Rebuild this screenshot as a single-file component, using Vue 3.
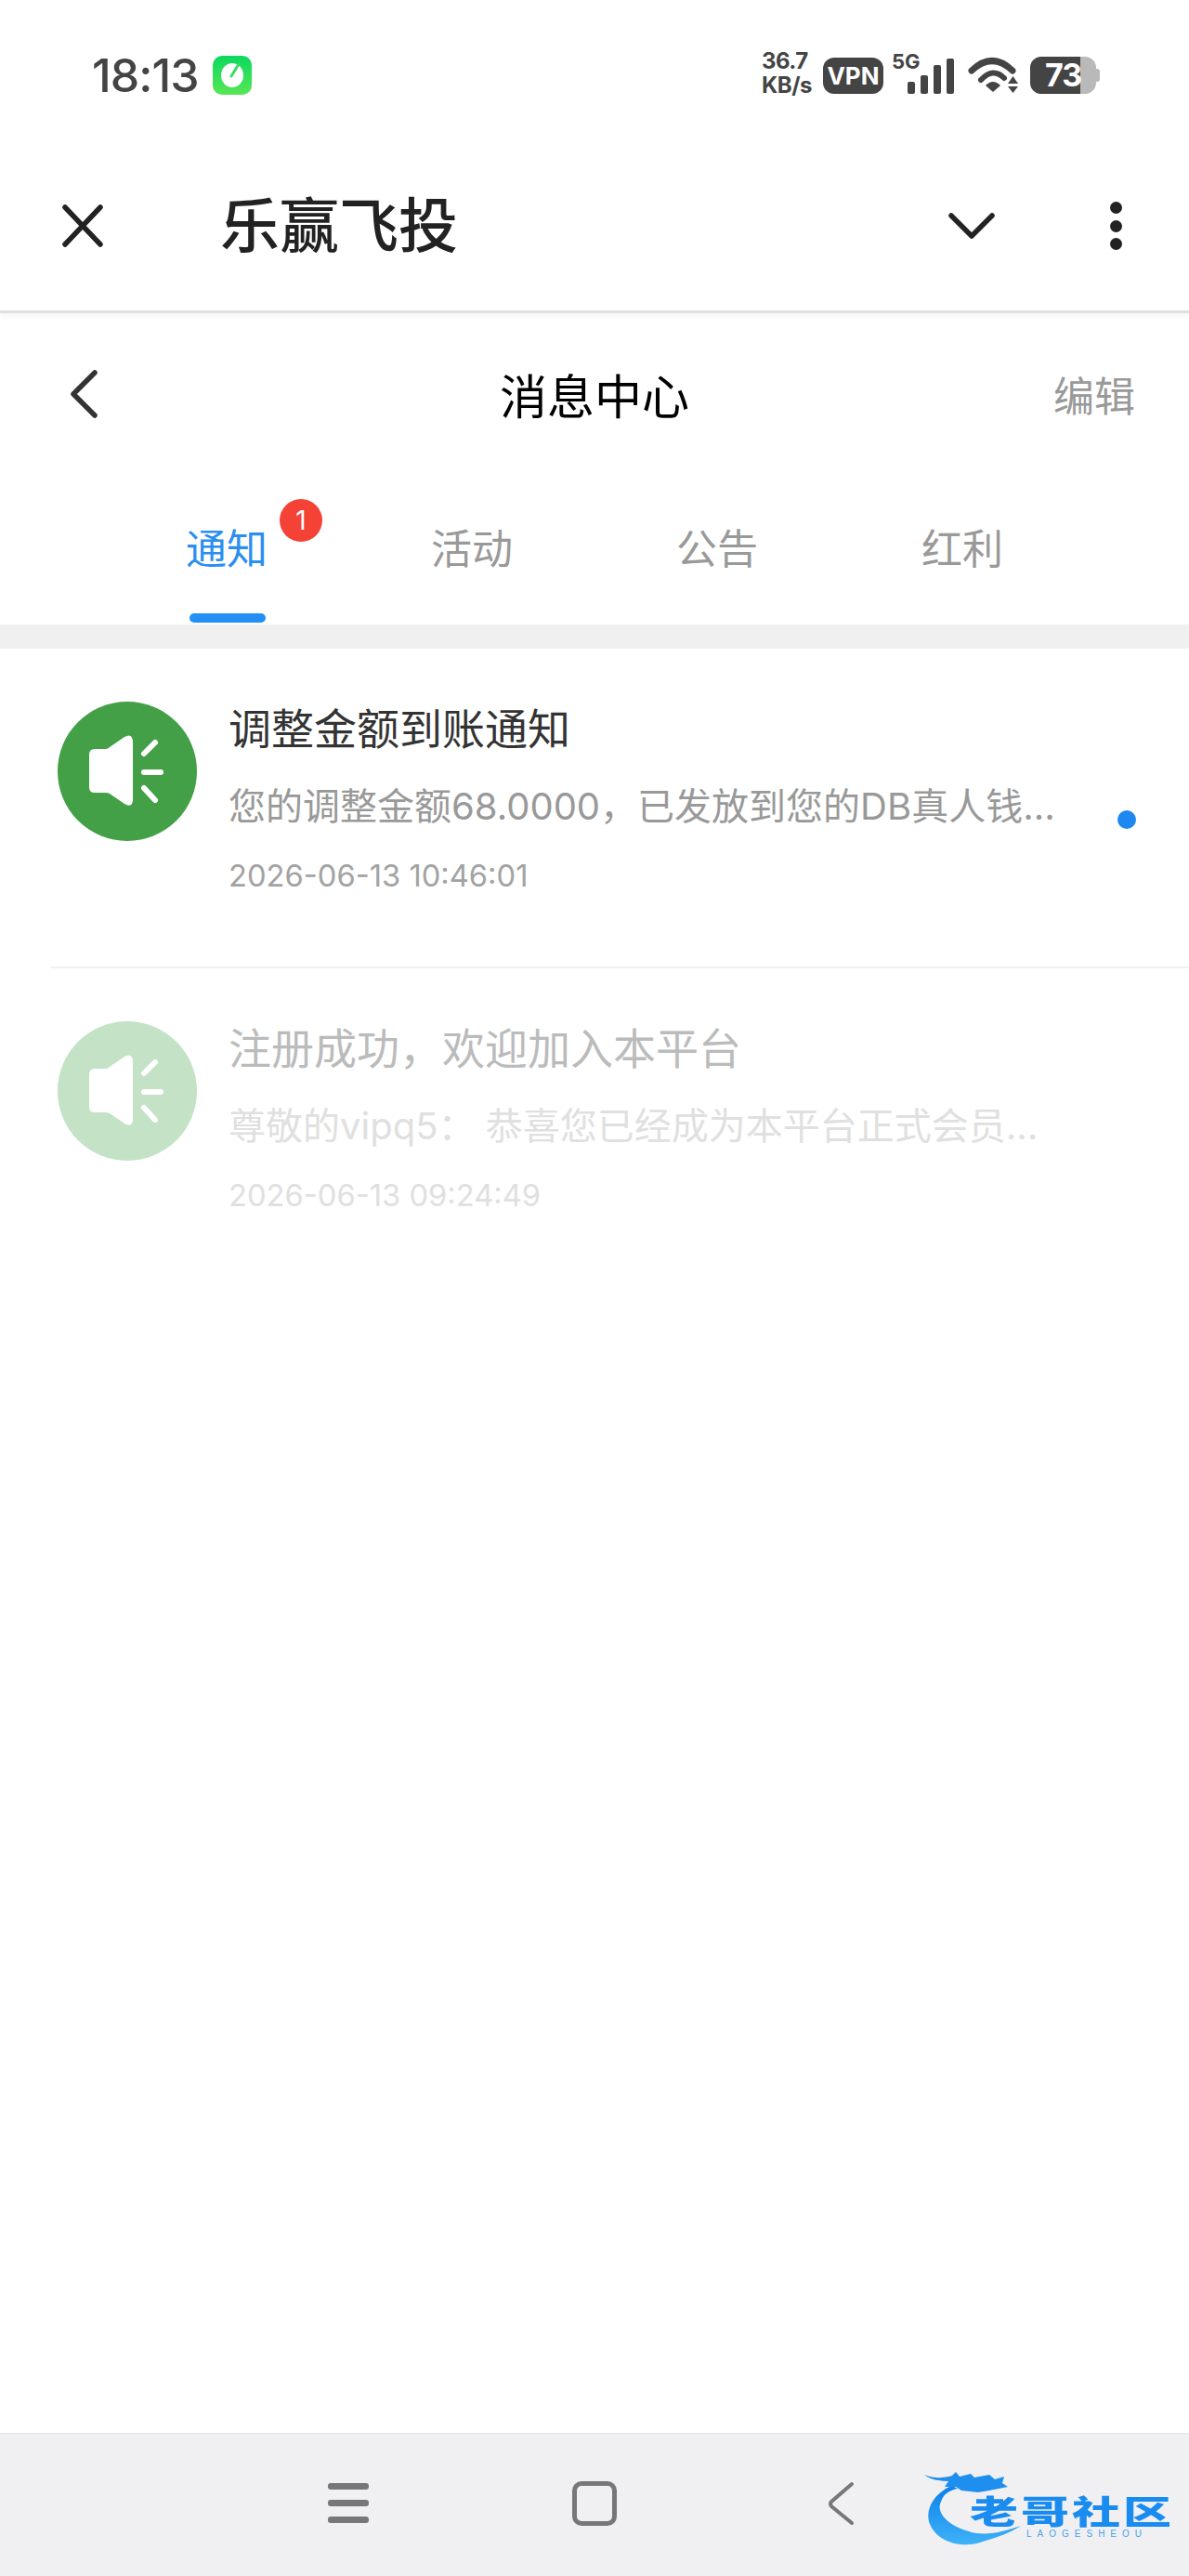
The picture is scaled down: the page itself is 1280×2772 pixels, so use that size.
<template>
  <div class="phone">
    <div class="status">
      <div class="status-left">
        <span class="clock">18:13</span>
        <svg class="app-dot" viewBox="0 0 42 42" width="42" height="42">
          <defs>
            <linearGradient id="appGreen" x1="0" y1="0" x2="0" y2="1">
              <stop offset="0" stop-color="#0bd95f" />
              <stop offset="1" stop-color="#58e655" />
            </linearGradient>
          </defs>
          <rect width="42" height="42" rx="10" fill="url(#appGreen)" />
          <ellipse cx="21" cy="21" rx="12" ry="13" fill="#fff" />
          <path d="M20 22 L28 9" stroke="#3bdc62" stroke-width="3" stroke-linecap="round" />
        </svg>
      </div>
      <div class="status-right">
        <div class="speed">
          <span>36.7</span>
          <span>KB/s</span>
        </div>
        <span class="vpn">VPN</span>
        <svg class="signal" viewBox="0 0 68 44" width="68" height="44">
          <text x="0" y="17" class="five-g">5G</text>
          <rect x="17" y="31" width="8" height="13" rx="2" />
          <rect x="31" y="24" width="8" height="20" rx="2" />
          <rect x="45" y="13" width="8" height="31" rx="2" />
          <rect x="59" y="6" width="8" height="38" rx="2" />
        </svg>
        <svg class="wifi" viewBox="0 0 54 40" width="54" height="40">
          <path d="M4 15 Q26 -6 48 15" fill="none" stroke="#444" stroke-width="7" stroke-linecap="round" />
          <path d="M14 25 Q27 11 39 23" fill="none" stroke="#444" stroke-width="6" stroke-linecap="round" />
          <path d="M19 31 Q27 23 35 31 L27 38 Z" fill="#444" />
          <path d="M48.5 21 L54 29 H43 Z M43 32 H54 L48.5 39 Z" fill="#444" />
        </svg>
        <div class="battery">
          <div class="battery-body"><span class="battery-fill">73</span></div>
          <i class="battery-nub"></i>
        </div>
      </div>
    </div>

    <div class="app-bar">
      <svg class="close" viewBox="0 0 44 46" width="44" height="46">
        <path d="M3 3 L41 43 M41 3 L3 43" stroke="#222" stroke-width="5.5" stroke-linecap="round" />
      </svg>
      <span class="app-title">乐赢飞投</span>
      <svg class="down" viewBox="0 0 50 28" width="50" height="28">
        <path d="M3 3 L25 25 L47 3" fill="none" stroke="#222" stroke-width="5.5" stroke-linecap="round" stroke-linejoin="round" />
      </svg>
      <div class="dots"><i></i><i></i><i></i></div>
    </div>

    <div class="page-head">
      <svg class="back" viewBox="0 0 30 52" width="30" height="52">
        <path d="M27 3 L4 26 L27 49" fill="none" stroke="#333" stroke-width="5.5" stroke-linecap="round" stroke-linejoin="round" />
      </svg>
      <span class="page-title">消息中心</span>
      <span class="edit">编辑</span>
    </div>

    <div class="tabs">
      <div v-for="(tab, index) in tabs" :key="tab" class="tab" :class="{ active: index === 0 }">
        <span class="tab-label">
          {{ tab }}
          <em v-if="index === 0" class="badge">1</em>
        </span>
      </div>
    </div>

    <div class="band"></div>

    <ul class="list">
      <li v-for="msg in messages" :key="msg.time" class="msg" :class="{ read: msg.read }">
        <div class="avatar">
          <svg viewBox="0 0 150 150" width="150" height="150">
            <path
              d="M34 57 Q34 51 40 51 H52 Q54 51 56 49 L72 38 Q81 33 81 44 V105 Q81 115 72 110 L56 99 Q54 98 52 98 H40 Q34 98 34 92 Z"
              fill="#fff"
            />
            <path d="M93 56 L105 44 M93 76 H111 M93 93 L105 106" stroke="#fff" stroke-width="6" stroke-linecap="round" />
          </svg>
        </div>
        <div class="msg-body">
          <div class="msg-title">{{ msg.title }}</div>
          <div class="msg-desc">{{ msg.desc }}</div>
          <div class="msg-time">{{ msg.time }}</div>
        </div>
        <i v-if="!msg.read" class="unread"></i>
      </li>
    </ul>

    <div class="nav">
      <div class="menu"><i></i><i></i><i></i></div>
      <div class="home"></div>
      <svg class="nav-back" viewBox="0 0 30 48" width="30" height="48">
        <path d="M27 3 L5 22 Q3 24 5 27 L27 45" fill="none" stroke="#777" stroke-width="4" stroke-linecap="round" />
      </svg>
      <div class="mark">
        <svg class="mark-ring" viewBox="0 0 130 100" width="130" height="100">
          <defs>
            <linearGradient id="ringBlue" x1="0" y1="0" x2="0" y2="1">
              <stop offset="0" stop-color="#0b80ea" />
              <stop offset="1" stop-color="#3fb2f7" />
            </linearGradient>
          </defs>
          <path d="M30 25 C10 32 0 52 6 66 C14 86 40 92 60 86 C76 81 92 76 104 68 C86 74 66 80 48 74 C26 68 12 54 18 42 C21 34 26 30 36 28 Z" fill="url(#ringBlue)" />
          <path d="M0 13 C12 18 24 16 30 14 L34 10 L38 15 L50 12 L54 16 L70 13 L76 18 L86 15 L84 22 L90 26 L70 30 L58 32 L40 30 L34 26 L22 26 L26 20 C16 20 6 18 0 13 Z" fill="#1e8fee" />
        </svg>
        <span class="mark-name">老哥社区</span>
        <span class="mark-sub">LAOGESHEOU</span>
      </div>
    </div>
  </div>
</template>

<script setup>
const tabs = ['通知', '活动', '公告', '红利']

const messages = [
  {
    title: '调整金额到账通知',
    desc: '您的调整金额68.0000，已发放到您的DB真人钱包，请注意查收',
    time: '2026-06-13 10:46:01',
    read: false
  },
  {
    title: '注册成功，欢迎加入本平台',
    desc: '尊敬的vipq5： 恭喜您已经成为本平台正式会员，祝您游戏愉快',
    time: '2026-06-13 09:24:49',
    read: true
  }
]
</script>

<style>
html, body {
  margin: 0;
  background: #fff;
}
</style>

<style scoped>
.phone {
  width: 1280px;
  height: 2772px;
  display: flex;
  flex-direction: column;
  background: #fff;
  overflow: hidden;
  font-family: "Noto Sans CJK SC", "Noto Sans", sans-serif;
}
i, em {
  display: block;
  font-style: normal;
}
svg {
  overflow: visible;
  flex: none;
}

/* status bar */
.status {
  height: 162px;
  display: flex;
  justify-content: space-between;
  padding: 57px 96px 0 99px;
  box-sizing: border-box;
}
.status-left {
  height: 48px;
  display: flex;
  align-items: center;
  gap: 16px;
}
.clock {
  font-family: "Inter", sans-serif;
  font-size: 50px;
  font-weight: 500;
  line-height: 48px;
  color: #444;
  letter-spacing: -1px;
}
.status-right {
  height: 44px;
  display: flex;
  align-items: flex-end;
  color: #444;
}
.speed {
  width: 66px;
  margin-bottom: -4px;
  display: flex;
  flex-direction: column;
  font-family: "Inter", sans-serif;
  font-size: 24px;
  font-weight: 700;
  line-height: 26px;
  letter-spacing: -0.5px;
  white-space: nowrap;
}
.vpn {
  width: 65px;
  height: 39px;
  margin-right: 9px;
  border-radius: 12px;
  background: #444;
  color: #fff;
  font-family: "Inter", sans-serif;
  font-size: 26px;
  font-weight: 700;
  line-height: 39px;
  text-align: center;
}
.signal {
  fill: #444;
  margin-right: 14px;
}
.five-g {
  font-family: "Inter", sans-serif;
  font-size: 22px;
  font-weight: 700;
}
.wifi {
  margin-right: 13px;
}
.battery {
  display: flex;
  align-items: center;
  height: 40px;
}
.battery-body {
  width: 71px;
  height: 40px;
  border-radius: 12px;
  background: #b9b9b9;
  overflow: hidden;
}
.battery-fill {
  display: block;
  width: 54px;
  height: 40px;
  padding-left: 16px;
  box-sizing: border-box;
  background: #444;
  color: #fff;
  font-family: "Inter", sans-serif;
  font-size: 34px;
  font-weight: 700;
  line-height: 40px;
  letter-spacing: -1px;
  white-space: nowrap;
}
.battery-nub {
  width: 4px;
  height: 14px;
  background: #b9b9b9;
  border-radius: 0 3px 3px 0;
}

/* app bar */
.app-bar {
  height: 175px;
  padding: 0 72px 10px 67px;
  box-sizing: border-box;
  display: flex;
  align-items: center;
  border-bottom: 3px solid #e0e0e0;
  box-shadow: 0 4px 5px rgba(0, 0, 0, 0.03);
}
.app-title {
  margin: 0 0 10px 126px;
  font-size: 64px;
  font-weight: 500;
  line-height: 80px;
  color: #222;
  flex: 1;
}
.down {
  margin-right: 124px;
}
.dots {
  display: flex;
  flex-direction: column;
  gap: 6.5px;
}
.dots i {
  width: 13px;
  height: 13px;
  border-radius: 50%;
  background: #222;
}

/* page head */
.page-head {
  height: 173px;
  padding: 0 58px 0 75px;
  display: flex;
  align-items: center;
  justify-content: space-between;
  position: relative;
}
.page-title {
  position: absolute;
  left: 0;
  right: 0;
  text-align: center;
  font-size: 51px;
  color: #000;
}
.edit {
  font-size: 44px;
  color: #999;
}

/* tabs */
.tabs {
  height: 162px;
  padding: 0 112px;
  display: grid;
  grid-template-columns: repeat(4, 1fr);
}
.tab {
  display: flex;
  justify-content: center;
  color: #999;
  font-size: 44px;
  line-height: 60px;
  padding-top: 48px;
  position: relative;
}
.tab-label {
  position: relative;
}
.tab.active {
  color: #2a8ff0;
}
.tab.active::after {
  content: "";
  position: absolute;
  bottom: 2px;
  left: 50%;
  width: 82px;
  height: 10px;
  margin-left: -40px;
  border-radius: 5px;
  background: #2490f5;
}
.badge {
  position: absolute;
  top: -21px;
  left: 101px;
  width: 46px;
  height: 46px;
  border-radius: 50%;
  background: #f44336;
  color: #fff;
  font-family: "Inter", sans-serif;
  font-size: 28px;
  line-height: 46px;
  text-align: center;
}

.band {
  height: 26px;
  background: #f0f0f0;
}

/* messages */
.list {
  flex: 1;
  margin: 0;
  padding: 0 0 0 55px;
  list-style: none;
}
.msg {
  height: 344px;
  box-sizing: border-box;
  padding: 57px 0 0 7px;
  display: flex;
  border-bottom: 2px solid #f0f0f0;
  position: relative;
}
.msg:last-child {
  border-bottom: 0;
}
.avatar {
  width: 150px;
  height: 150px;
  border-radius: 50%;
  background: #43a047;
  flex: none;
}
.msg-body {
  width: 905px;
  margin-left: 34px;
}
.msg-title {
  font-size: 46px;
  line-height: 56px;
  color: #333;
  margin-top: -2px;
}
.msg-desc {
  margin-top: 31px;
  font-family: "Inter", "Noto Sans CJK SC", sans-serif;
  font-size: 40px;
  line-height: 56px;
  color: #999;
  white-space: nowrap;
  overflow: hidden;
  text-overflow: ellipsis;
}
.msg-time {
  margin-top: 26px;
  font-family: "Inter", sans-serif;
  font-size: 32.7px;
  line-height: 40px;
  color: #a3a3a3;
}
.unread {
  position: absolute;
  left: 1148px;
  top: 174px;
  width: 20px;
  height: 20px;
  border-radius: 50%;
  background: #1e88f0;
}
.read .avatar {
  background: #c4e2c6;
}
.read .msg-title {
  color: #bbb;
}
.read .msg-desc,
.read .msg-time {
  color: #e0e0e0;
}

/* system nav */
.nav {
  height: 154px;
  box-sizing: border-box;
  border-top: 1px solid #e2e2e2;
  background: #f0f0f2;
  position: relative;
  display: flex;
  align-items: center;
  padding: 0 0 4px 353px;
}
.menu {
  width: 44px;
  display: flex;
  flex-direction: column;
  gap: 11px;
}
.menu i {
  height: 7px;
  border-radius: 3px;
  background: #777;
}
.home {
  width: 48px;
  height: 48px;
  margin-left: 219px;
  box-sizing: border-box;
  border: 5px solid #777;
  border-radius: 10px;
}
.nav-back {
  margin-left: 226px;
}
.mark {
  position: absolute;
  left: 995px;
  top: 31px;
  width: 270px;
  height: 100px;
}
.mark-ring {
  position: absolute;
  left: 0;
  top: 0;
  filter: blur(0.7px);
}
.mark-name {
  position: absolute;
  left: 49px;
  top: 21px;
  font-size: 52px;
  font-weight: 900;
  line-height: 60px;
  letter-spacing: 3px;
  color: #1a8cf0;
  white-space: nowrap;
  transform: scaleY(0.68);
  filter: blur(0.6px);
}
.mark-sub {
  position: absolute;
  left: 110px;
  top: 69px;
  font-family: "Liberation Sans", sans-serif;
  font-size: 10px;
  line-height: 16px;
  letter-spacing: 6px;
  color: #4aa3ea;
  white-space: nowrap;
}
</style>
